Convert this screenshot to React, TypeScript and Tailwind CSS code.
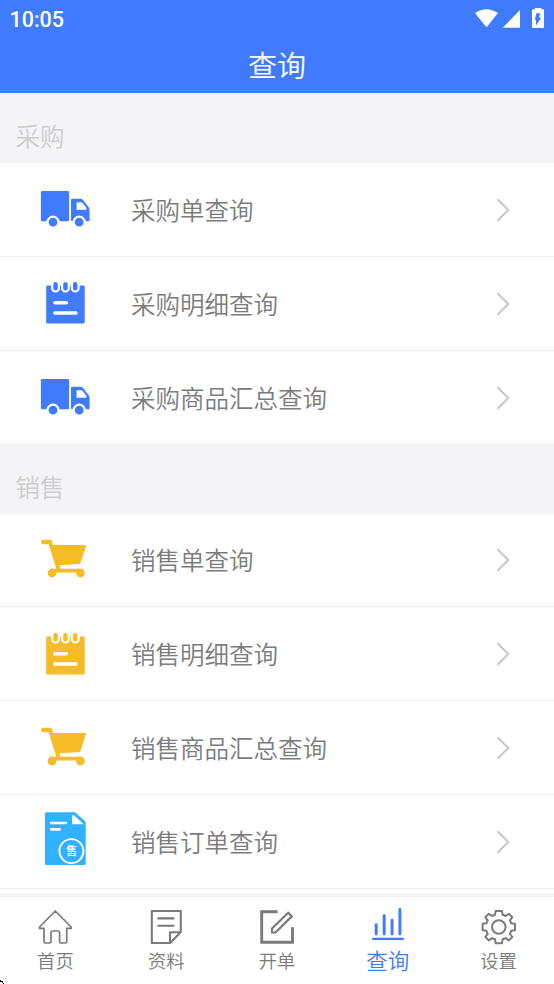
import type { ReactNode } from "react";

function Truck() {
  return (
    <svg viewBox="0 0 64 64" className="size-16" fill="currentColor">
      <rect x="7.9" y="13" width="28.2" height="30.2" rx="1.2" />
      <path d="M39.2 20.8H47.5Q49 20.8 50 22L55.5 29Q56.6 30.5 56.6 32V42Q56.6 43.2 55.4 43.2H39.2Q38 43.2 38 42V22Q38 20.8 39.2 20.8Z" />
      <path d="M43.6 24.3H48.2Q49 24.3 49.5 25L53.4 29.8V31.8H43.6Z" fill="white" />
      <g stroke="white" strokeWidth="2.2">
        <circle cx="20" cy="44.2" r="5.5" />
        <circle cx="46.2" cy="44.2" r="5.5" />
      </g>
    </svg>
  );
}

function Notepad() {
  return (
    <svg viewBox="0 0 64 64" className="size-16" fill="currentColor">
      <rect x="13.2" y="13.5" width="38.5" height="38" rx="1.3" />
      <g stroke="white" strokeWidth="2.2">
        <rect x="19.2" y="8.9" width="6.7" height="10.6" rx="3.3" />
        <rect x="29.1" y="8.9" width="6.7" height="10.6" rx="3.3" />
        <rect x="38.9" y="8.9" width="6.7" height="10.6" rx="3.3" />
      </g>
      <path d="M22 30.8H33.3M22 41H43" stroke="white" strokeWidth="3.6" strokeLinecap="round" />
    </svg>
  );
}

function Cart() {
  return (
    <svg viewBox="0 0 64 64" className="size-16" fill="currentColor">
      <path d="M10 10.8H17.6Q18.6 10.8 18.9 11.8L20 16H52Q53.4 16 52.9 17.5L47.6 33.8Q47.2 35 46 35.1L26.6 36.3L27.4 39.7H48V43.6H18V39.7H23.4L15.6 15.2H10Q8 15.2 8 13Q8 10.8 10 10.8Z" />
      <circle cx="19" cy="44" r="4.4" />
      <circle cx="47.4" cy="44" r="4.4" />
    </svg>
  );
}

function OrderSheet() {
  return (
    <svg viewBox="0 0 64 64" className="size-16" fill="currentColor">
      <path d="M13.5 2.3H42L52.7 11.8V53.5Q52.7 55 51.2 55H13.5Q12 55 12 53.5V3.8Q12 2.3 13.5 2.3Z" />
      <path d="M39.2 5Q40.4 4.8 41.6 5.8L50.7 14.2H39.2Z" fill="white" />
      <path d="M18.2 13H32.7M18.2 19.4H26.6" stroke="white" strokeWidth="2.7" strokeLinecap="round" />
      <circle cx="38.4" cy="41.1" r="12" fill="none" stroke="white" strokeWidth="1.9" />
      <text x="38.4" y="44.8" textAnchor="middle" fill="white" className="font-['Noto_Sans_CJK_SC',sans-serif] text-[11px] font-bold">售</text>
    </svg>
  );
}

function Chevron() {
  return (
    <svg viewBox="0 0 14 24" className="mt-px h-6 w-3.5 text-[#c9c9c9]" fill="none" stroke="currentColor" strokeWidth="2.1">
      <path d="M1.5 1.2L12.3 12L1.5 22.8" />
    </svg>
  );
}

function StatusIcons() {
  return (
    <svg viewBox="0 0 80 24" className="h-6 w-20" fill="white">
      <path d="M1 9Q12.5 1.4 24 9L13.2 22.4Q12.5 23.2 11.8 22.4Z" />
      <path d="M28.7 23.8L46 6V23.8Z" />
      <path d="M61.2 5.2H58.9Q58 5.2 58 6.2V23Q58 24 59 24H69Q70 24 70 23V6.2Q70 5.2 69.1 5.2H67.4V4.6Q67.4 4 66.8 4H61.4Q60.8 4 60.8 4.6V5.2Z" />
      <path d="M62.4 9.3H66.2L65 13.8H67.2L62 21.5V15.8H60.8Z" fill="#407bff" />
    </svg>
  );
}

function TabSvg({ children, strokeWidth = 2 }: { children: ReactNode; strokeWidth?: number }) {
  return (
    <svg viewBox="0 0 40 40" className="size-10" fill="none" stroke="currentColor" strokeWidth={strokeWidth} strokeLinejoin="round">
      {children}
    </svg>
  );
}

const homeIcon = (
  <TabSvg strokeWidth={1.7}>
    <path d="M20.3 4L4.5 20V21.3H9V34.8Q9 36 10.2 36H14.8Q16 36 16 34.8V25.5Q16 24 17.2 24H23.4Q24.6 24 24.6 25.5V34.8Q24.6 36 25.8 36H30.5Q31.7 36 31.7 34.8V21.3H36.2V20Z" />
  </TabSvg>
);
const noteIcon = (
  <TabSvg strokeWidth={2.1}>
    <path d="M5.8 4H34.8V25L24.2 36H5.8ZM34.8 25.2H24V36M11.5 11.4H28.4M11.5 18.7H28.4" />
  </TabSvg>
);
const editIcon = (
  <TabSvg strokeWidth={2.9}>
    <path d="M20.5 4.8H4.7V35.2H35.5V20.2" strokeLinejoin="miter" />
    <path d="M15 25.5V21.5L31.2 5.8L34.8 9.4L18.5 25.5Z" strokeWidth="2.2" strokeLinejoin="miter" />
  </TabSvg>
);
const chartIcon = (
  <TabSvg strokeWidth={2.9}>
    <path d="M8.2 27V17.8M16.2 27V8.6M24.1 27V13.3M31.9 27V2.4" strokeLinecap="round" />
    <path d="M5 31.8H35" strokeWidth="2.2" strokeLinecap="round" />
  </TabSvg>
);
const gearIcon = (
  <TabSvg strokeWidth={2}>
    <circle cx="19.8" cy="20" r="6.8" />
    <path d="M16.6 3.9H23L23.6 7.8L26.6 9L29.8 6.7L33.3 10.1L30.9 13.3L32.2 16.3L36 16.8V23.2L32.2 23.8L30.9 26.8L33.3 30L29.8 33.4L26.6 31.1L23.6 32.3L23 36.2H16.6L16 32.3L13 31.1L9.8 33.4L6.3 30L8.7 26.8L7.4 23.8L3.6 23.2V16.8L7.4 16.3L8.7 13.3L6.3 10.1L9.8 6.7L13 9L16 7.8Z" />
  </TabSvg>
);

function Row({ icon, label, color, last }: { icon: ReactNode; label: string; color: string; last?: boolean }) {
  return (
    <div className={last ? "flex h-[92.4px] items-center bg-white pt-px pl-[33px] pr-11" : "flex h-[93.9px] items-center border-b border-[#f1f1f3] bg-white pl-[33px] pr-11"}>
      <div className={color}>
        <div className="pt-[1.6px]">{icon}</div>
      </div>
      <span className="ml-[34px] flex-1 text-[24.5px] leading-9 text-[#7c7c7c]">{label}</span>
      <Chevron />
    </div>
  );
}

function SectionTitle({ children }: { children: ReactNode }) {
  return <h2 className="flex h-[70.2px] items-end pl-[15.5px] pb-[9px] text-[24.5px] leading-9 text-[#cccccc]">{children}</h2>;
}

const tabs = [
  { label: "首页", icon: homeIcon },
  { label: "资料", icon: noteIcon },
  { label: "开单", icon: editIcon },
  { label: "查询", icon: chartIcon, active: true },
  { label: "设置", icon: gearIcon },
];

const blue = "text-[#407bff]";
const yellow = "text-[#f5bc27]";
const sky = "text-[#30b2ff]";

export default function App() {
  return (
    <div className="relative flex h-[984px] w-[554px] flex-col overflow-hidden bg-[#f4f4f7] font-['Noto_Sans_CJK_SC',sans-serif] font-[350]">
      <header className="h-[93px] shrink-0 bg-[#407bff] text-white">
        <div className="flex h-9 items-start justify-between pl-[9.5px]">
          <span className="pt-2 font-[Roboto,sans-serif] text-[21.5px] leading-6 font-medium">10:05</span>
          <div className="pt-1"><StatusIcons /></div>
        </div>
        <h1 className="pt-2.5 text-center text-[29px] leading-9 font-[350]">查询</h1>
      </header>
      <main className="min-h-0 flex-1 overflow-hidden">
        <SectionTitle>采购</SectionTitle>
        <Row icon={<Truck />} label="采购单查询" color={blue} />
        <Row icon={<Notepad />} label="采购明细查询" color={blue} />
        <Row icon={<Truck />} label="采购商品汇总查询" color={blue} last />
        <SectionTitle>销售</SectionTitle>
        <Row icon={<Cart />} label="销售单查询" color={yellow} />
        <Row icon={<Notepad />} label="销售明细查询" color={yellow} />
        <Row icon={<Cart />} label="销售商品汇总查询" color={yellow} />
        <Row icon={<OrderSheet />} label="销售订单查询" color={sky} />
        <div className="h-1 bg-white" />
        <div className="h-[5px] bg-linear-to-b from-[#fbfbfb] to-[#ededed]" />
      </main>
      <nav className="grid h-[87px] shrink-0 grid-cols-5 bg-white pt-[10px]">
        {tabs.map((tab) => (
          <div key={tab.label} className={tab.active ? "flex flex-col items-center text-[#407bff]" : "flex flex-col items-center text-[#7a7a7a]"}>
            {tab.icon}
            <span className={tab.active ? "-mt-px text-[21.5px] leading-7" : "-mt-px text-[18.3px] leading-7"}>{tab.label}</span>
          </div>
        ))}
      </nav>
      <svg viewBox="0 0 4 4" className="absolute bottom-0 left-0 size-1" fill="black">
        <path d="M0 0H1V1H3V2H3V3H4V4H3V3H2V2H0Z" />
      </svg>
    </div>
  );
}
